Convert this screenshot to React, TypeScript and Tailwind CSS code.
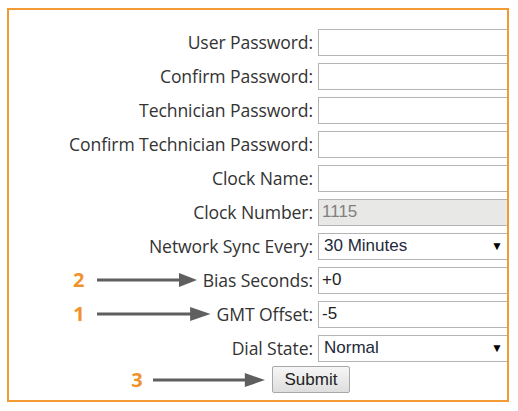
import React from "react";

const label = "font-['Open_Sans',sans-serif] text-[17.6px] tracking-[-0.1px] text-[#333] whitespace-nowrap";
const fieldBase =
  "h-[27px] w-[200px] border border-[#b4b4b4] px-[3px] font-['Liberation_Sans',Arial,sans-serif] text-[17px] flex items-center";

const Arrow = ({ className = "" }: { className?: string }) => (
  <svg className={className} height="14" viewBox="0 0 100 14" preserveAspectRatio="none">
    <rect x="0" y="5.5" width="84" height="3" fill="#5f5f5f" />
    <polygon points="82,0 100,7 82,14" fill="#5f5f5f" />
  </svg>
);

const Num = ({ n }: { n: string }) => (
  <span className="font-['Open_Sans',sans-serif] font-bold text-[20px] leading-none text-[#f0922b] w-[12px] text-center">
    {n}
  </span>
);

type Row = { text: string; kind: "input" | "disabled" | "select"; value?: string; mark?: string };

const rows: Row[] = [
  { text: "User Password:", kind: "input" },
  { text: "Confirm Password:", kind: "input" },
  { text: "Technician Password:", kind: "input" },
  { text: "Confirm Technician Password:", kind: "input" },
  { text: "Clock Name:", kind: "input" },
  { text: "Clock Number:", kind: "disabled", value: "1115" },
  { text: "Network Sync Every:", kind: "select", value: "30 Minutes" },
  { text: "Bias Seconds:", kind: "input", value: "+0", mark: "2" },
  { text: "GMT Offset:", kind: "input", value: "-5", mark: "1" },
  { text: "Dial State:", kind: "select", value: "Normal" },
];

const Field = ({ row }: { row: Row }) => {
  if (row.kind === "select") {
    return (
      <div className={fieldBase + " bg-white w-[188px] justify-between pl-[5px] pr-[14px]"}>
        <span className="text-[#1e2a3a]">{row.value}</span>
        <span className="text-[12px] text-black">▼</span>
      </div>
    );
  }
  if (row.kind === "disabled") {
    return <div className={fieldBase + " bg-[#e8e8e6] text-[#808080]"}>{row.value}</div>;
  }
  return <div className={fieldBase + " bg-white text-[#222]"}>{row.value}</div>;
};

export default function App() {
  return (
    <div className="w-[518px] h-[411px] bg-white pt-[8px] pl-[7px]">
      <div className="w-[502px] h-[394px] border-2 border-[#f29a34] overflow-hidden pt-[15px]">
        <div className="grid grid-cols-[304px_1fr] gap-x-[5px]">
          {rows.map((r) => (
            <React.Fragment key={r.text}>
              <div className="h-[34px] flex items-center justify-end">
                {r.mark && (
                  <div className="flex items-center flex-1 pl-[64px] pr-[6px]">
                    <Num n={r.mark} />
                    <Arrow className="flex-1 ml-[12px]" />
                  </div>
                )}
                <span className={label}>{r.text}</span>
              </div>
              <div className="h-[34px] flex items-center">
                <Field row={r} />
              </div>
            </React.Fragment>
          ))}
        </div>
        <div className="flex items-center pl-[122px] pt-[1px]">
          <Num n="3" />
          <Arrow className="w-[112px] ml-[10px]" />
          <button className="ml-[7px] h-[27px] w-[78px] border border-[#a8a8a8] rounded-[2px] bg-gradient-to-b from-[#f6f6f6] to-[#dedede] font-['Liberation_Sans',Arial,sans-serif] text-[17px] text-[#222]">
            Submit
          </button>
        </div>
      </div>
    </div>
  );
}
